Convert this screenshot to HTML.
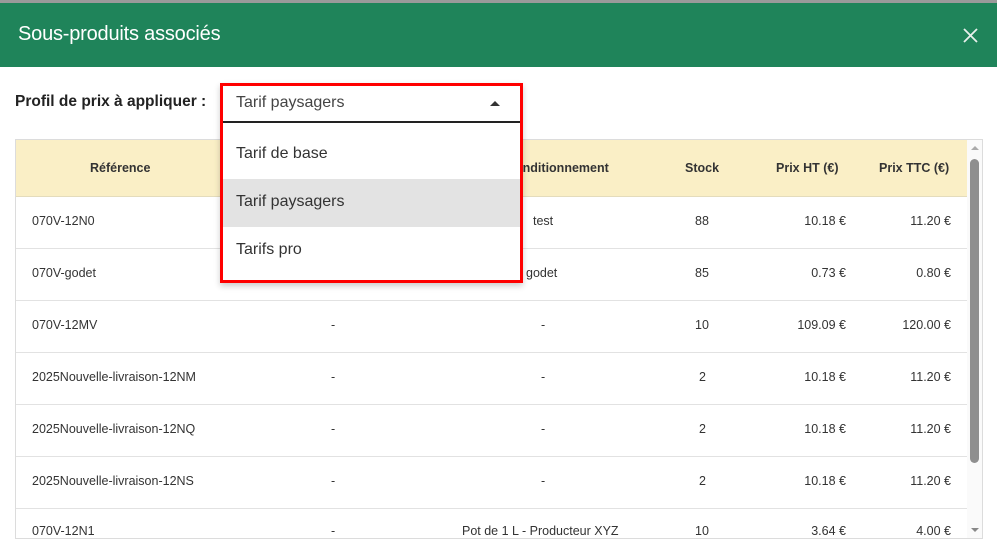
<!DOCTYPE html>
<html><head><meta charset="utf-8"><style>
*{box-sizing:border-box;margin:0;padding:0}
body{width:997px;height:554px;overflow:hidden;background:#fff;font-family:"Liberation Sans",sans-serif;color:#333;position:relative}
.top{position:absolute;left:0;top:0;width:997px;height:3px;background:#9a9a9a}
.hdr{position:absolute;left:0;top:3px;width:997px;height:64px;background:#1f845a;color:#fff;font-size:20px;padding:20px 0 0 18px;letter-spacing:-0.2px}
.x{position:absolute;right:19px;top:25px}
.lbl{position:absolute;left:15px;top:93px;font-size:15.5px;font-weight:bold;color:#222}
.tbl{position:absolute;left:15px;top:139px;width:968px;height:400px;border:1px solid #dcdcdc;overflow:hidden}
.th{position:absolute;left:0;top:0;width:952px;height:57px;background:#faefc6;border-bottom:1px solid #e4dcbc}
.c{position:absolute;font-size:12.5px;white-space:nowrap}
.th .c{font-weight:bold;color:#333;top:21px}
.row{position:absolute;left:0;width:952px;height:52px;border-bottom:1px solid #e2e2e2}
.row .c{top:17px}
.sb{position:absolute;right:0;top:0;width:15px;height:398px;background:#fafafa}
.thumb{position:absolute;left:3px;top:19px;width:9px;height:304px;background:#8f8f8f;border-radius:5px}
.dd{position:absolute;left:220px;top:83px;width:303px;height:200px;border:3px solid #f00;background:#fff;box-shadow:0 3px 6px rgba(0,0,0,.2)}
.sel{position:absolute;left:0;top:0;width:297px;height:37px;border-bottom:2px solid #222;font-size:16px;color:#444;padding:8px 0 0 13px}
.arr{position:absolute;right:20px;top:15px;width:0;height:0;border-left:5px solid transparent;border-right:5px solid transparent;border-bottom:5px solid #333}
.opt{position:absolute;left:0;width:297px;height:48px;font-size:16px;color:#333;padding:14px 0 0 13px}
</style></head><body>
<div class="top"></div>
<div class="hdr">Sous-produits associés<svg class="x" width="15" height="15" viewBox="0 0 15 15"><path d="M1 1L14 14M14 1L1 14" stroke="#e8f0ec" stroke-width="1.8"/></svg></div>
<div class="lbl">Profil de prix à appliquer :</div>
<div class="tbl">
<div class="th">
<span class="c" style="left:74px">Référence</span>
<span class="c" style="left:490px">Conditionnement</span>
<span class="c" style="left:669px">Stock</span>
<span class="c" style="left:760px">Prix HT (€)</span>
<span class="c" style="left:863px">Prix TTC (€)</span>
</div>
<div class="row" style="top:57px"><span class="c" style="left:16px">070V-12N0</span><span class="c" style="left:517px">test</span><span class="c" style="left:679px">88</span><span class="c" style="right:122px">10.18 €</span><span class="c" style="right:17px">11.20 €</span></div>
<div class="row" style="top:109px"><span class="c" style="left:16px">070V-godet</span><span class="c" style="left:510px">godet</span><span class="c" style="left:679px">85</span><span class="c" style="right:122px">0.73 €</span><span class="c" style="right:17px">0.80 €</span></div>
<div class="row" style="top:161px"><span class="c" style="left:16px">070V-12MV</span><span class="c" style="left:315px">-</span><span class="c" style="left:525px">-</span><span class="c" style="left:679px">10</span><span class="c" style="right:122px">109.09 €</span><span class="c" style="right:17px">120.00 €</span></div>
<div class="row" style="top:213px"><span class="c" style="left:16px">2025Nouvelle-livraison-12NM</span><span class="c" style="left:315px">-</span><span class="c" style="left:525px">-</span><span class="c" style="left:683px">2</span><span class="c" style="right:122px">10.18 €</span><span class="c" style="right:17px">11.20 €</span></div>
<div class="row" style="top:265px"><span class="c" style="left:16px">2025Nouvelle-livraison-12NQ</span><span class="c" style="left:315px">-</span><span class="c" style="left:525px">-</span><span class="c" style="left:683px">2</span><span class="c" style="right:122px">10.18 €</span><span class="c" style="right:17px">11.20 €</span></div>
<div class="row" style="top:317px"><span class="c" style="left:16px">2025Nouvelle-livraison-12NS</span><span class="c" style="left:315px">-</span><span class="c" style="left:525px">-</span><span class="c" style="left:683px">2</span><span class="c" style="right:122px">10.18 €</span><span class="c" style="right:17px">11.20 €</span></div>
<div class="row" style="top:369px;border:none"><span class="c" style="left:16px;top:15px">070V-12N1</span><span class="c" style="left:315px;top:15px">-</span><span class="c" style="left:446px;top:15px">Pot de 1 L - Producteur XYZ</span><span class="c" style="left:679px;top:15px">10</span><span class="c" style="right:122px;top:15px">3.64 €</span><span class="c" style="right:17px;top:15px">4.00 €</span></div>
<div class="sb"><div style="position:absolute;left:4px;top:6px;border-left:4px solid transparent;border-right:4px solid transparent;border-bottom:4px solid #aaa"></div><div class="thumb"></div><div style="position:absolute;left:4px;bottom:6px;border-left:4px solid transparent;border-right:4px solid transparent;border-top:4px solid #888"></div></div>
</div>
<div class="dd">
<div class="sel">Tarif paysagers<span class="arr"></span></div>
<div class="opt" style="top:45px">Tarif de base</div>
<div class="opt" style="top:93px;background:#e3e3e3">Tarif paysagers</div>
<div class="opt" style="top:141px">Tarifs pro</div>
</div>
</body></html>
